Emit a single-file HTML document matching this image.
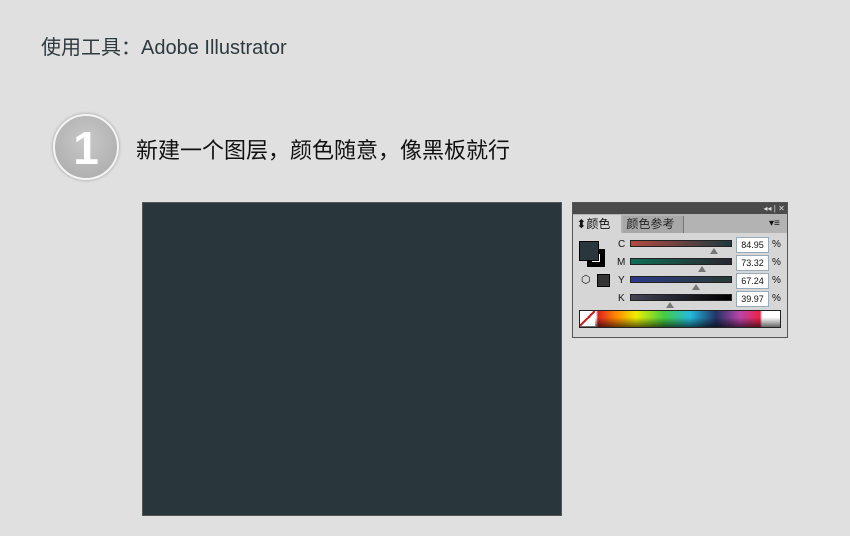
<!DOCTYPE html>
<html><head><meta charset="utf-8"><style>
body{margin:0;width:850px;height:536px;background:#e0e0e0;position:relative;overflow:hidden;font-family:"Liberation Sans","Noto Sans CJK SC",sans-serif}
.a{position:absolute}
.t1{left:41px;top:31px;font-size:20px;color:#2e3a3e}
.c{left:53px;top:114px;width:62px;height:62px;border-radius:50%;background:radial-gradient(circle at 50% 40%,#c8c8c8,#a9a9a9);border:2px solid #f4f4f4;box-shadow:0 0 3px #999;color:#fff;font-size:46px;font-weight:bold;text-align:center;line-height:64px}
.t2{left:136px;top:133px;font-size:22px;color:#111}
.cv{left:142px;top:202px;width:418px;height:312px;background:#29363c;border:1px solid #555}
.p{left:572px;top:202px;width:214px;height:134px;background:#d6d6d6;border:1px solid #555;font-size:10px;color:#111}
.bar{height:10px;border:1px solid #222}
.v{position:absolute;left:163px;width:31px;height:14px;background:#fff;border:1px solid #9ab;font-size:9px;line-height:14px;text-align:center}
.tri{position:absolute;width:0;height:0;border-left:4px solid transparent;border-right:4px solid transparent;border-bottom:6px solid #777}
</style></head><body>
<div class="a t1">使用工具：Adobe Illustrator</div>
<div class="a c">1</div>
<div class="a t2">新建一个图层，颜色随意，像黑板就行</div>
<div class="a cv"></div>
<div class="a p">
 <div class="a" style="left:0;top:0;width:214px;height:11px;background:#4a4a4a;color:#ddd;font-size:8px;text-align:right;line-height:11px">◂◂ | ✕&nbsp;</div>
 <div class="a" style="left:0;top:11px;width:214px;height:19px;background:#b3b3b3"></div>
 <div class="a" style="left:0;top:12px;width:48px;height:19px;background:#d6d6d6;font-size:12px;line-height:19px">&nbsp;⬍颜色</div>
 <div class="a" style="left:50px;top:13px;width:60px;height:17px;background:#a8a8a8;border-right:1px solid #777;font-size:12px;line-height:17px;color:#222">&nbsp;颜色参考</div>
 <div class="a" style="left:196px;top:15px;font-size:10px">▾≡</div>
 <div class="a" style="left:14px;top:46px;width:18px;height:18px;background:#000"></div>
 <div class="a" style="left:19px;top:51px;width:8px;height:8px;background:#fff"></div>
 <div class="a" style="left:6px;top:38px;width:18px;height:18px;background:#29363c;border:1px solid #000"></div>
 <div class="a" style="left:8px;top:70px;font-size:11px">⬡</div>
 <div class="a" style="left:24px;top:71px;width:11px;height:11px;background:#333;border:1px solid #000"></div>
 <div class="a" style="left:45px;top:36px">C</div><div class="a" style="left:44px;top:54px">M</div><div class="a" style="left:45px;top:72px">Y</div><div class="a" style="left:45px;top:90px">K</div>
 <div class="a bar" style="left:57px;top:37px;width:100px;height:5px;background:linear-gradient(90deg,#b24a42,#1e3a3e)"></div>
 <div class="a bar" style="left:57px;top:55px;width:100px;height:5px;background:linear-gradient(90deg,#0f6e55,#2a2530)"></div>
 <div class="a bar" style="left:57px;top:73px;width:100px;height:5px;background:linear-gradient(90deg,#2a3a8a,#283a32)"></div>
 <div class="a bar" style="left:57px;top:91px;width:100px;height:5px;background:linear-gradient(90deg,#445,#000)"></div>
 <div class="tri" style="left:137px;top:45px"></div><div class="tri" style="left:125px;top:63px"></div><div class="tri" style="left:119px;top:81px"></div><div class="tri" style="left:93px;top:99px"></div>
 <div class="v" style="top:34px">84.95</div><div class="v" style="top:52px">73.32</div><div class="v" style="top:70px">67.24</div><div class="v" style="top:88px">39.97</div>
 <div class="a" style="left:199px;top:36px">%</div><div class="a" style="left:199px;top:54px">%</div><div class="a" style="left:199px;top:72px">%</div><div class="a" style="left:199px;top:90px">%</div>
 <div class="a" style="left:6px;top:107px;width:200px;height:16px;border:1px solid #222;background:linear-gradient(180deg,transparent 40%,rgba(0,0,0,.6)),linear-gradient(90deg,#fff 0,#fff 8%,#d22 9%,#f80 18%,#ee0 28%,#4c4 42%,#2bd 55%,#236 68%,#b4a 80%,#e24 90%,#fff 91%)"></div>
 <div class="a" style="left:7px;top:108px;width:15px;height:15px;background:#fff;background-image:linear-gradient(135deg,transparent 45%,#c22 45%,#c22 55%,transparent 55%)"></div>
</div>
</body></html>
